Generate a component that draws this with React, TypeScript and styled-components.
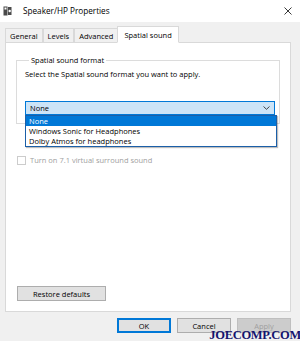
import React from "react";
import styled, { createGlobalStyle } from "styled-components";

const GlobalStyle = createGlobalStyle`
  html, body {
    margin: 0;
    padding: 0;
    background: #f0f0f0;
  }
  body {
    font-family: "Open Sans", "Liberation Sans", sans-serif;
    font-size: 7.5px;
    line-height: 10px;
    color: #000;
  }
`;

const Window = styled.div`
  position: relative;
  width: 300px;
  height: 341px;
  background: #f0f0f0;
  display: flex;
  flex-direction: column;
  overflow: hidden;
`;

const TitleBar = styled.div`
  height: 22px;
  background: #fff;
  display: flex;
  align-items: center;
  padding: 0 8px 0 3px;
  gap: 11px;
`;

const Title = styled.span`
  flex: 1;
  font-size: 8.2px;
  color: #000;
`;

const TabStrip = styled.div`
  display: flex;
  align-items: flex-end;
  height: 21px;
  padding-left: 5px;
  margin-bottom: -1px;
  position: relative;
  z-index: 1;
`;

const Tab = styled.div<{ $active?: boolean }>`
  height: ${(p) => (p.$active ? "17px" : "15px")};
  padding: 0 ${(p) => (p.$active ? "6px" : "4px")};
  margin-left: ${(p) => (p.$active ? "-1px" : "0")};
  display: flex;
  align-items: center;
  box-sizing: border-box;
  background: ${(p) => (p.$active ? "#fff" : "#f0f0f0")};
  border: 1px solid #d9d9d9;
  border-bottom: ${(p) => (p.$active ? "1px solid #fff" : "1px solid #d9d9d9")};
  & + & {
    border-left: ${(p) => (p.$active ? "1px solid #d9d9d9" : "none")};
  }
`;

const Panel = styled.div`
  margin: 0 9px 0 5px;
  height: 270px;
  box-sizing: border-box;
  background: #fff;
  border: 1px solid #d9d9d9;
  padding: 12px 10px 0 10px;
  display: flex;
  flex-direction: column;
`;

const GroupBox = styled.fieldset`
  position: relative;
  margin: 0;
  height: 69px;
  box-sizing: border-box;
  border: 1px solid #dcdcdc;
  padding: 4px 4px 0 8px;
  legend {
    padding: 0 2px;
    margin-left: 4px;
  }
`;

const Hint = styled.div`
  margin-bottom: 22px;
`;

const Select = styled.div`
  position: relative;
  height: 14px;
  box-sizing: border-box;
  background: #cce4f7;
  border: 1px solid #0078d7;
  display: flex;
  align-items: center;
  padding: 0 4px;
`;

const SelectValue = styled.span`
  flex: 1;
`;

const ListBox = styled.div`
  position: absolute;
  top: 13px;
  left: -1px;
  width: 250px;
  background: #fff;
  border: 1px solid #1b5fa8;
  box-shadow: 1px 1px 1px rgba(0, 0, 0, 0.25);
  z-index: 2;
`;

const Option = styled.div<{ $selected?: boolean }>`
  height: 10px;
  line-height: 10px;
  padding: 0 3px;
  background: ${(p) => (p.$selected ? "#0078d7" : "#fff")};
  color: ${(p) => (p.$selected ? "#fff" : "#000")};
`;

const CheckRow = styled.div`
  display: flex;
  align-items: center;
  gap: 4px;
  margin-top: 31px;
  margin-left: 1px;
  color: #a0a0a0;
`;

const CheckBox = styled.span`
  width: 9px;
  height: 9px;
  box-sizing: border-box;
  border: 1px solid #cccccc;
  background: #fff;
`;

const Spacer = styled.div`
  flex: 1;
`;

const Button = styled.button<{ $default?: boolean; $disabled?: boolean; $w?: number }>`
  width: ${(p) => p.$w ?? 54}px;
  height: 15px;
  padding: 0;
  font-family: inherit;
  font-size: 7.5px;
  color: ${(p) => (p.$disabled ? "#a0a0a0" : "#000")};
  background: ${(p) => (p.$disabled ? "#cccccc" : "#e1e1e1")};
  border: 1px solid ${(p) => (p.$default ? "#0078d7" : p.$disabled ? "#bfbfbf" : "#adadad")};
  box-shadow: ${(p) => (p.$default ? "inset 0 0 0 1px #0078d7" : "none")};
`;

const RestoreButton = styled(Button)`
  margin-bottom: 10px;
  margin-left: 1px;
`;

const Footer = styled.div`
  display: flex;
  justify-content: flex-end;
  gap: 6px;
  padding: 6px 9px 0 0;
`;

const Watermark = styled.div`
  position: absolute;
  right: -1px;
  bottom: 1px;
  font-family: "Liberation Serif", serif;
  font-weight: bold;
  font-size: 12.5px;
  letter-spacing: -0.3px;
  color: #14146e;
  transform: scaleY(1.05);
`;

const SpeakerIcon = () => (
  <svg width="9" height="10" viewBox="0 0 9 10">
    <rect x="0.5" y="0.5" width="4" height="9" fill="#4a4a4a" />
    <rect x="1.5" y="1.5" width="2" height="2" fill="#fff" />
    <rect x="5" y="1" width="3.5" height="8" fill="#4a4a4a" />
    <circle cx="6.7" cy="5" r="1.2" fill="#fff" />
  </svg>
);

const CloseIcon = () => (
  <svg width="8" height="8" viewBox="0 0 8 8">
    <path d="M0.5 0.5 L7.5 7.5 M7.5 0.5 L0.5 7.5" stroke="#222" strokeWidth="0.9" />
  </svg>
);

const Chevron = () => (
  <svg width="7" height="4" viewBox="0 0 7 4">
    <path d="M0.5 0.5 L3.5 3.3 L6.5 0.5" stroke="#333" strokeWidth="0.9" fill="none" />
  </svg>
);

const tabs = ["General", "Levels", "Advanced", "Spatial sound"];
const options = ["None", "Windows Sonic for Headphones", "Dolby Atmos for headphones"];

const App = () => {
  return (
    <>
      <GlobalStyle />
      <Window>
        <TitleBar>
          <SpeakerIcon />
          <Title>Speaker/HP Properties</Title>
          <CloseIcon />
        </TitleBar>
        <TabStrip>
          {tabs.map((t) => (
            <Tab key={t} $active={t === "Spatial sound"}>
              {t}
            </Tab>
          ))}
        </TabStrip>
        <Panel>
          <GroupBox>
            <legend>Spatial sound format</legend>
            <Hint>Select the Spatial sound format you want to apply.</Hint>
            <Select>
              <SelectValue>None</SelectValue>
              <Chevron />
              <ListBox>
                {options.map((o, i) => (
                  <Option key={o} $selected={i === 0}>
                    {o}
                  </Option>
                ))}
              </ListBox>
            </Select>
          </GroupBox>
          <CheckRow>
            <CheckBox />
            <span>Turn on 7.1 virtual surround sound</span>
          </CheckRow>
          <Spacer />
          <RestoreButton $w={89}>Restore defaults</RestoreButton>
        </Panel>
        <Footer>
          <Button $default>OK</Button>
          <Button>Cancel</Button>
          <Button $disabled>Apply</Button>
        </Footer>
        <Watermark>JOECOMP.COM</Watermark>
      </Window>
    </>
  );
};

export default App;
